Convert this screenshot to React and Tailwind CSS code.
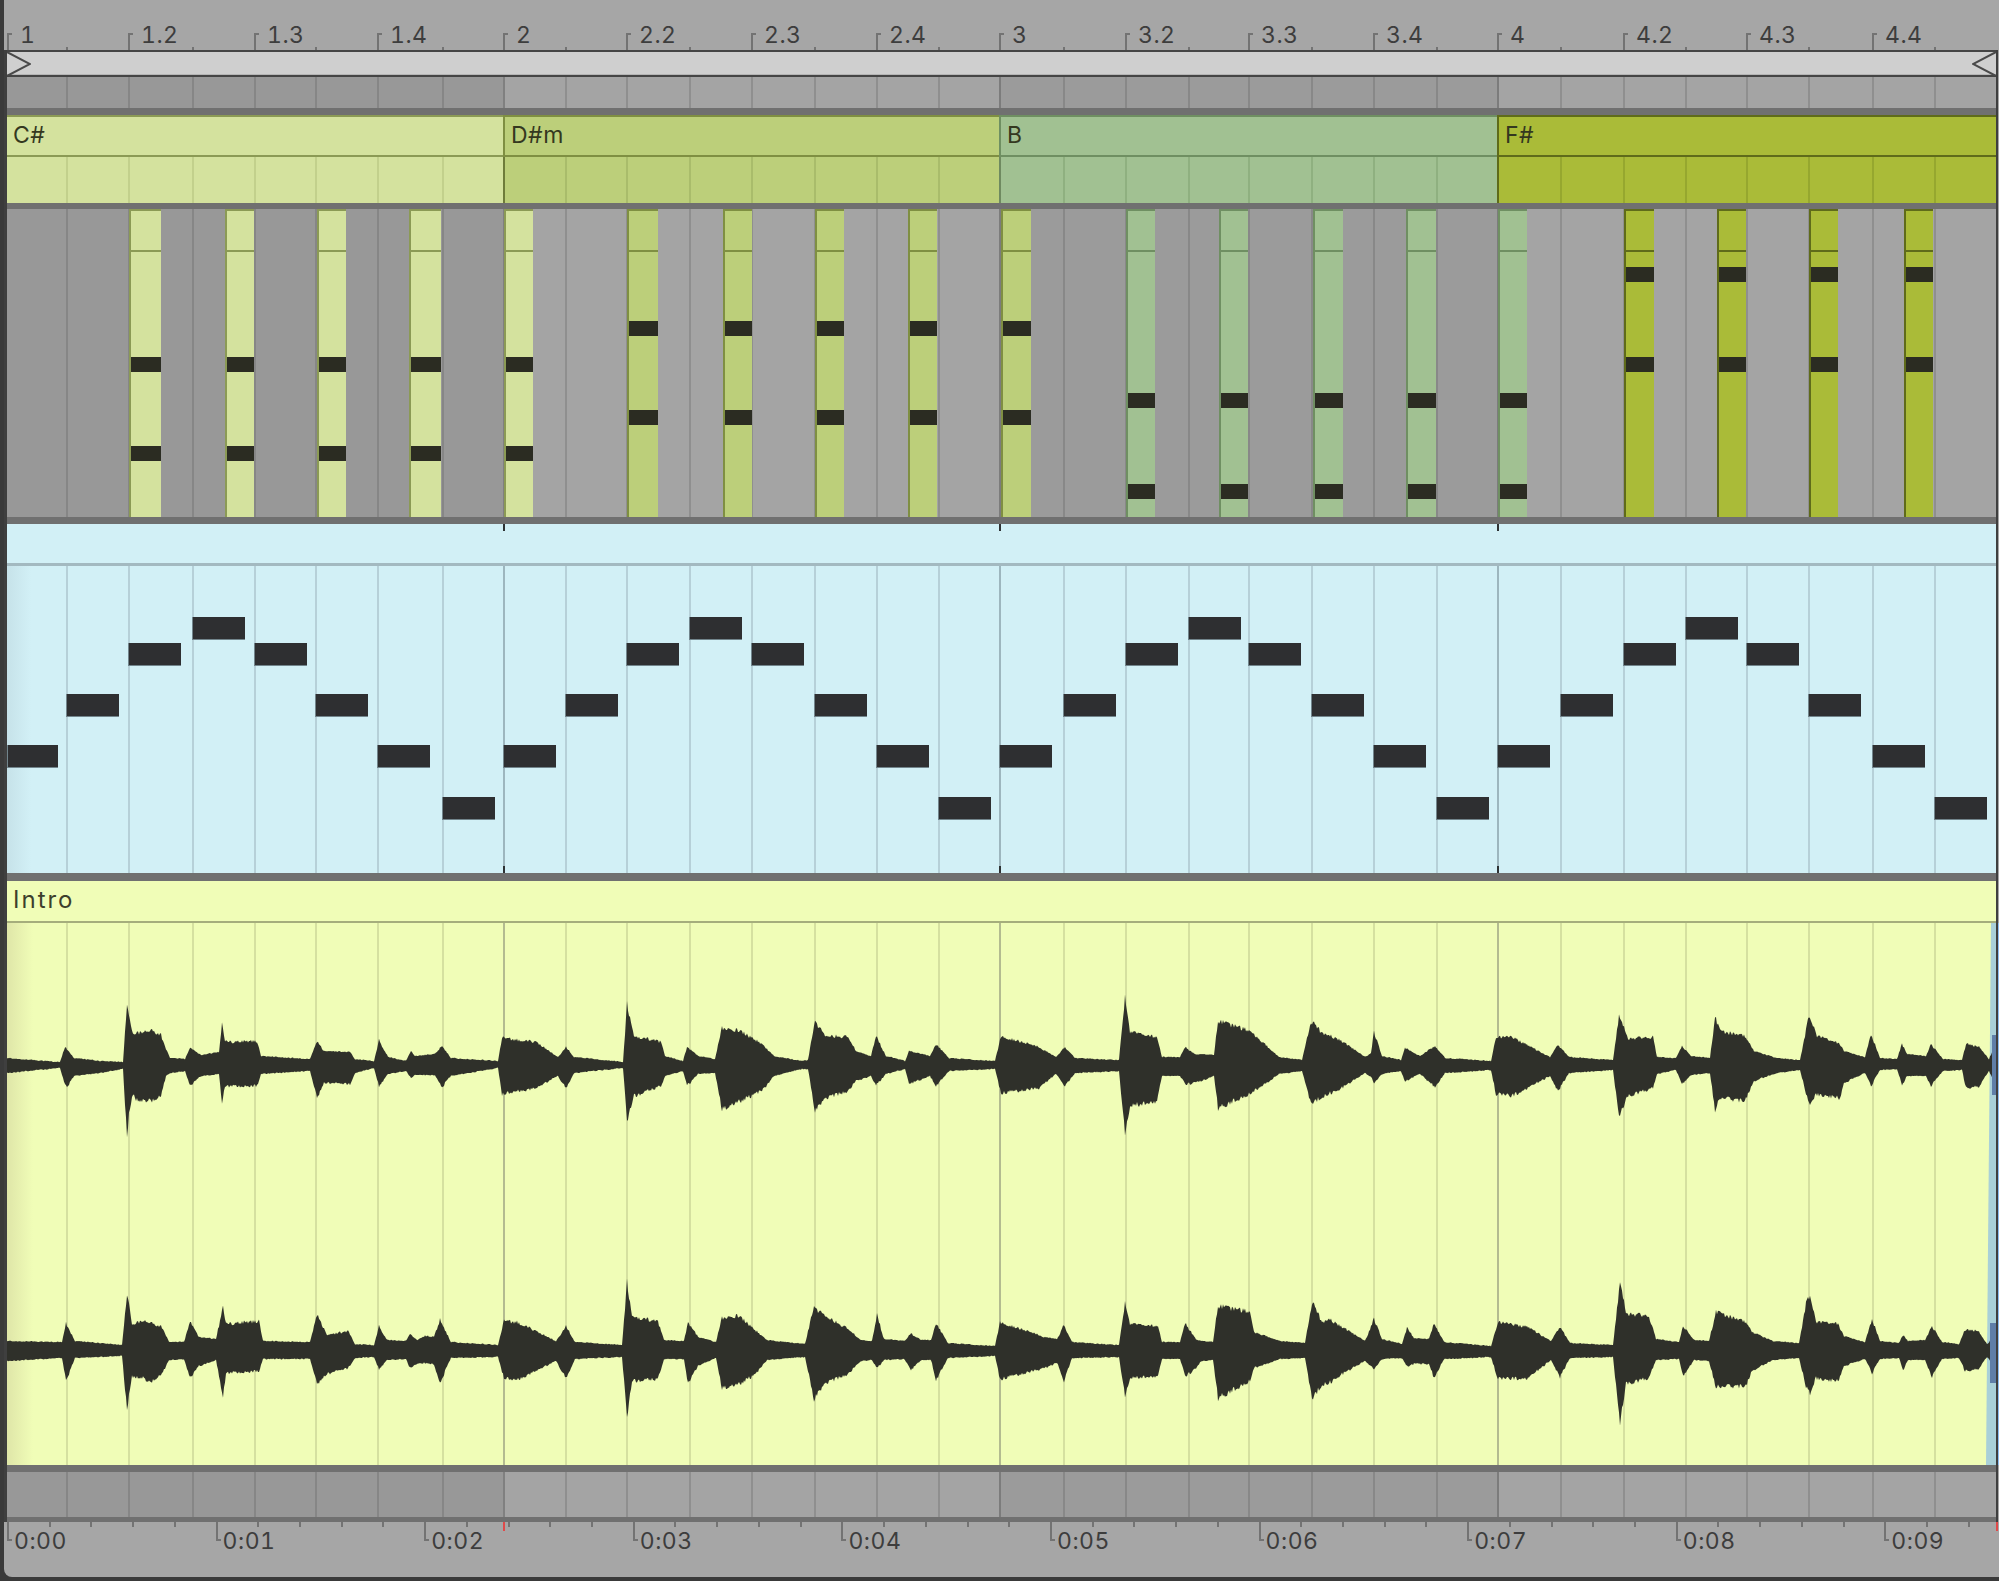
const COLS = 'grid-cols-[59px_62px_64px_62px_61px_62px_65px_61px_62px_61px_63px_62px_63px_62px_62px_61px_64px_62px_63px_60px_63px_62px_63px_61px_63px_63px_62px_61px_62px_64px_62px_62px]'

const CELLS = [59, 62, 64, 62, 61, 62, 65, 61, 62, 61, 63, 62, 63, 62, 62, 61, 64, 62, 63, 60, 63, 62, 63, 61, 63, 63, 62, 61, 62, 64, 62, 62]
const CELL_X = CELLS.reduce((a, w) => [...a, a[a.length - 1] + w], [0])

const BEATS = ['1', '1.2', '1.3', '1.4', '2', '2.2', '2.3', '2.4', '3', '3.2', '3.3', '3.4', '4', '4.2', '4.3', '4.4']

const GREY = [
  { bg: 'bg-[#989898]', line: 'border-[#868686]', bar: 'border-[#808080]' },
  { bg: 'bg-[#a4a4a4]', line: 'border-[#8f8f8f]', bar: 'border-[#808080]' },
  { bg: 'bg-[#9b9b9b]', line: 'border-[#888888]', bar: 'border-[#7c7c7c]' },
  { bg: 'bg-[#a4a4a4]', line: 'border-[#8f8f8f]', bar: 'border-[#7c7c7c]' },
]
const CLIPS = [
  { bg: 'bg-[#d4e29e]', line: 'border-[#c2d08c]', bar: 'border-[#7e8c4e]', top: 'border-[#8b9a55]', name: 'C#' },
  { bg: 'bg-[#bccf7a]', line: 'border-[#a9bc6b]', bar: 'border-[#6e7c3a]', top: 'border-[#7f8f42]', name: 'D#m' },
  { bg: 'bg-[#a1c192]', line: 'border-[#8fb080]', bar: 'border-[#6f8a60]', top: 'border-[#6f8f62]', name: 'B' },
  { bg: 'bg-[#aabb38]', line: 'border-[#96a72f]', bar: 'border-[#5f6b1a]', top: 'border-[#5f6b1a]', name: 'F#' },
]
const BLUE = Array(4).fill({ bg: 'bg-[#d2f0f6]', line: 'border-[#b6d0d8]', bar: 'border-[#9db6be]' })
const YELLOW = Array(4).fill({ bg: 'bg-[#f0fdb7]', line: 'border-[#d5e0a0]', bar: 'border-[#b3bb90]' })

// x in page pixels, marks = y of the two chord notes from the top of the lane
const STRIPS = [
  [129, 161, 0], [225, 254, 0], [317, 346, 0], [409, 441, 0], [504, 533, 0],
  [627, 658, 1], [723, 752, 1], [815, 844, 1], [908, 937, 1], [1001, 1031, 1],
  [1126, 1155, 2], [1219, 1248, 2], [1313, 1343, 2], [1406, 1436, 2], [1498, 1527, 2],
  [1624, 1654, 3], [1717, 1746, 3], [1809, 1838, 3], [1904, 1933, 3],
]
const MARKS = [[148, 237], [112, 201], [184, 275], [58, 148]]

const ARP = [179, 128, 77, 51, 77, 128, 179, 231]

// envelope of the audio: [x, up, down]
const CH1 = [[6,5,8],[60,1,3],[65,16,20],[67,14,22],[74,5,11],[100,2,8],[123,1,4],[127,61,71],[129,45,50],[133,30,29],[136,30,34],[152,32,36],[161,28,31],[166,14,11],[170,5,8],[185,4,6],[190,15,21],[201,8,11],[219,11,9],[222,39,38],[225,22,21],[228,21,21],[257,22,21],[261,7,9],[310,4,6],[317,22,33],[324,12,18],[350,11,19],[355,4,8],[374,2,3],[379,23,21],[388,6,9],[406,2,6],[411,12,13],[415,7,10],[435,9,10],[442,17,22],[451,5,11],[498,2,3],[502,25,29],[536,21,23],[558,6,11],[566,16,23],[574,6,8],[623,1,3],[627,59,55],[634,27,31],[661,21,21],[665,7,11],[683,2,6],[687,16,19],[690,14,18],[698,7,9],[715,4,8],[722,35,44],[740,32,36],[762,19,26],[774,7,11],[802,2,4],[808,3,4],[815,42,46],[825,27,33],[848,26,26],[856,12,16],[871,7,11],[876,27,20],[886,7,9],[905,2,4],[909,12,19],[930,7,11],[936,19,21],[949,5,6],[995,2,4],[1001,27,28],[1039,16,23],[1056,6,9],[1065,16,21],[1075,5,8],[1119,3,6],[1125,67,70],[1130,31,41],[1157,26,36],[1162,6,11],[1180,6,11],[1185,16,19],[1195,9,18],[1214,8,11],[1218,42,43],[1250,32,29],[1279,6,9],[1302,3,6],[1311,42,39],[1321,31,32],[1340,23,24],[1365,6,8],[1371,10,12],[1374,31,18],[1382,7,9],[1401,3,6],[1405,15,16],[1420,7,9],[1435,17,22],[1445,5,8],[1491,2,5],[1496,26,29],[1512,26,31],[1550,6,11],[1558,18,26],[1569,6,8],[1613,3,5],[1619,48,52],[1628,24,31],[1653,26,23],[1657,6,9],[1676,5,5],[1682,17,19],[1691,7,10],[1710,5,8],[1715,46,45],[1720,32,33],[1745,27,36],[1754,12,16],[1777,5,8],[1800,3,5],[1809,47,39],[1817,27,29],[1840,19,33],[1844,12,18],[1865,6,8],[1871,29,21],[1880,5,5],[1897,4,4],[1902,19,20],[1907,9,11],[1926,7,11],[1931,19,21],[1943,4,6],[1962,3,5],[1966,19,23],[1979,16,21],[1989,4,6],[1996,20,20]]

const CH2 = [[6,8,10],[62,7,7],[66,26,30],[75,8,7],[122,4,5],[127,56,58],[132,25,26],[143,28,26],[150,26,32],[162,22,23],[169,7,9],[184,7,8],[190,27,27],[199,12,15],[216,10,9],[223,42,46],[226,25,22],[259,28,20],[263,8,8],[310,7,8],[317,35,33],[327,14,23],[348,18,17],[355,5,7],[374,4,6],[379,23,18],[387,9,9],[406,8,8],[410,15,17],[417,9,13],[425,13,12],[434,12,13],[440,29,32],[451,7,7],[498,4,6],[504,28,27],[517,27,29],[556,8,10],[566,23,27],[575,7,8],[622,4,6],[627,67,65],[632,33,30],[658,27,28],[664,9,8],[684,8,8],[688,27,32],[698,12,15],[716,7,7],[722,31,37],[739,33,33],[756,18,23],[767,9,9],[805,5,6],[814,42,48],[825,33,32],[848,20,23],[861,9,10],[872,8,9],[877,34,17],[884,10,9],[904,8,8],[911,15,19],[921,9,9],[931,9,9],[936,26,29],[948,6,7],[995,3,5],[1000,27,28],[1045,12,17],[1057,10,12],[1064,24,30],[1072,7,7],[1119,4,6],[1125,47,46],[1130,25,27],[1158,23,25],[1162,7,8],[1180,7,8],[1185,26,25],[1196,10,18],[1201,8,10],[1213,7,9],[1218,43,47],[1250,37,30],[1254,17,17],[1280,8,8],[1305,6,7],[1312,47,48],[1322,27,33],[1329,30,32],[1342,22,23],[1365,8,10],[1374,30,18],[1382,10,8],[1402,5,7],[1407,21,15],[1414,11,13],[1429,10,13],[1434,26,27],[1444,7,8],[1491,3,6],[1498,27,28],[1528,22,27],[1551,8,9],[1560,22,26],[1570,6,7],[1613,4,6],[1620,68,73],[1626,35,33],[1649,33,27],[1656,10,9],[1679,7,8],[1683,23,25],[1694,9,9],[1709,8,10],[1716,37,36],[1746,27,35],[1752,17,20],[1773,8,9],[1799,6,7],[1806,45,35],[1810,53,42],[1816,27,27],[1838,25,30],[1844,13,15],[1865,7,8],[1872,30,22],[1880,8,8],[1899,6,7],[1903,14,19],[1908,8,9],[1925,9,9],[1932,23,26],[1942,7,8],[1959,5,7],[1965,19,20],[1978,18,18],[1987,5,6],[1996,14,16]]

const jitter = (x, k) => {
  const s = Math.sin(x * 12.9898 + k) * 43758.5453
  return s - Math.floor(s) - 0.5
}

function envelope(points, center) {
  let i = 0
  const top = []
  const bottom = []
  for (let x = 7; x <= 1996; x++) {
    while (i < points.length - 2 && points[i + 1][0] <= x) i++
    const [x0, u0, d0] = points[i]
    const [x1, u1, d1] = points[i + 1]
    const t = Math.min(1, (x - x0) / (x1 - x0))
    const u = u0 + (u1 - u0) * t
    const d = d0 + (d1 - d0) * t
    const rough = (a, k) => a + 1 + jitter(x, k) * (a > 12 ? a * 0.14 : 1)
    top.push(`${x - 7},${(center - rough(u, 1)).toFixed(1)}`)
    bottom.unshift(`${x - 7},${(center + rough(d, 7)).toFixed(1)}`)
  }
  return `M${top.join('L')}L${bottom.join('L')}Z`
}

function GridRow({ bars, height, children }) {
  return (
    <div className={`relative grid ${COLS} ${height}`}>
      {CELLS.map((_, i) => {
        const b = bars[Math.floor(i / 8)]
        return <div key={i} className={`${b.bg} ${i === 0 ? '' : 'border-l-2'} ${i % 8 === 0 ? b.bar : b.line}`} />
      })}
      {children}
    </div>
  )
}

function Thick({ height }) {
  return <div className={`${height} bg-[#707070]`} />
}

function Ruler() {
  return (
    <div className={`h-[50px] ml-[3px] w-[1989px] grid ${COLS}`}>
      {CELLS.map((_, i) => (
        <div key={i} className="relative">
          {i % 2 === 0 ? (
            <>
              <div className="absolute left-0 bottom-0 h-[17px] w-[5px] border-l-2 border-t-2 border-[#737373]" />
              <span className="absolute left-[13px] top-[23px] text-[23px] leading-[24px] tabular-nums tracking-[0.5px] text-[#3d3d3d] whitespace-nowrap">{BEATS[i / 2]}</span>
            </>
          ) : (
            <div className="absolute left-0 bottom-0 h-[3px] w-[2px] bg-[#737373]" />
          )}
        </div>
      ))}
    </div>
  )
}

function LoopBar() {
  return (
    <div className="relative h-[23px] bg-[#cfcfcf] border-b border-[#b5b5b5]">
      <svg className="absolute left-0 top-0" width="24" height="24" viewBox="0 0 24 24" fill="none">
        <path d="M0 0L23 12L0 24" stroke="#4a4a4a" strokeWidth="2" />
      </svg>
      <svg className="absolute right-0 top-0" width="24" height="24" viewBox="0 0 24 24" fill="none">
        <path d="M24 0L1 12L24 24" stroke="#4a4a4a" strokeWidth="2" />
      </svg>
    </div>
  )
}

function ClipHeaders() {
  return (
    <div className="grid grid-cols-[496px_496px_498px_499px] h-[42px]">
      {CLIPS.map((c, i) => (
        <div
          key={c.name}
          className={`${c.bg} ${c.top} ${i === 0 ? '' : 'border-l-2'} border-t-2 border-b-2 pl-[6px] text-[23px] leading-[36px] tracking-[0.5px] text-[#34381f]`}
        >
          {c.name}
        </div>
      ))}
    </div>
  )
}

function ChordLane() {
  return (
    <GridRow bars={GREY} height="h-[308px]">
      {STRIPS.map(([x0, x1, c]) => (
        <div
          key={x0}
          className={`absolute top-0 bottom-0 border-l-2 border-t-2 ${CLIPS[c].bg} ${CLIPS[c].top}`}
          style={{ left: x0 - 7, width: x1 - x0 }}
        >
          <div className={`absolute left-0 right-0 top-[39px] h-[2px] border-t-2 ${CLIPS[c].top}`} />
          {MARKS[c].map(y => (
            <div key={y} className="absolute left-0 right-0 h-[15px] bg-[#2b2c22]" style={{ top: y - 2 }} />
          ))}
        </div>
      ))}
    </GridRow>
  )
}

function PianoLane() {
  return (
    <>
      <div className="relative h-[39px] bg-[#d2f0f6] border-b-0">
        {[8, 16, 24].map(i => (
          <div key={i} className="absolute top-0 h-[7px] w-[2px] bg-[#2e3234]" style={{ left: CELL_X[i] }} />
        ))}
      </div>
      <div className="h-[3px] bg-[#a3b9c0]" />
      <GridRow bars={BLUE} height="h-[307px]">
        <div className="absolute left-0 top-0 bottom-0 w-[24px] bg-gradient-to-r from-[#c6e2e9] to-transparent" />
        {[8, 16, 24].map(i => (
          <div key={i} className="absolute bottom-0 h-[7px] w-[2px] bg-[#2e3234]" style={{ left: CELL_X[i] }} />
        ))}
        {Array.from({ length: 32 }, (_, i) => (
          <div
            key={i}
            className="absolute h-[23px] bg-[#2e2f31] border-l border-b border-[#72858c]"
            style={{ left: CELL_X[i], top: ARP[i % 8], width: i === 0 ? 51 : 53 }}
          />
        ))}
      </GridRow>
    </>
  )
}

function AudioLane() {
  return (
    <>
      <div className="h-[40px] bg-[#f0fdb7] pl-[6px] text-[24px] leading-[38px] tracking-[2px] text-[#3c3f2c]">Intro</div>
      <div className="h-[2px] bg-[#a5ad7c]" />
      <GridRow bars={YELLOW} height="h-[542px]">
        <div className="absolute left-0 top-0 bottom-0 w-[26px] bg-gradient-to-r from-[#dfe6a8] to-transparent" />
        <svg className="absolute inset-0" width="1989" height="542" viewBox="0 0 1989 542">
          <polygon points="1984,0 1989,0 1989,542 1979,542" fill="#a9d0d8" />
          <path d={envelope(CH1, 141)} fill="#2f302a" />
          <path d={envelope(CH2, 427)} fill="#2f302a" />
          <rect x="1985" y="112" width="4" height="60" fill="#5f7ea8" />
          <rect x="1983" y="400" width="6" height="60" fill="#5f7ea8" />
        </svg>
      </GridRow>
    </>
  )
}

function Timeline() {
  return (
    <div className="relative h-[55px] pl-[3px] flex overflow-hidden">
      {Array.from({ length: 10 }, (_, s) => (
        <div key={s} className="relative shrink-0 w-[208.6px] pl-[7px] pt-[7px] text-[23px] leading-[24px] tabular-nums tracking-[0.5px] text-[#3d3d3d]">
          <div className={`absolute left-0 top-0 h-[19px] w-[5px] border-l-2 border-b-2 border-[#737373] ${s === 0 ? 'border-l-0' : ''}`} />
          {[41.7, 83.4, 125.2, 166.9].map(x => (
            <div key={x} className="absolute top-0 h-[5px] w-[2px] bg-[#737373]" style={{ left: x }} />
          ))}
          0:0{s}
        </div>
      ))}
      <div className="absolute left-[499px] top-0 h-[9px] w-[2px] bg-[#e04a4a]" />
      <div className="absolute left-[1992px] top-0 h-[9px] w-[2px] bg-[#e04a4a]" />
    </div>
  )
}

export default function App() {
  return (
    <div className="w-[1999px] h-[1581px] bg-[#3a3a3a] pl-[4px] pb-[4px] flex font-['Inter',sans-serif] overflow-hidden">
      <div className="relative w-[1995px] h-[1577px] bg-[#a6a6a6] rounded-bl-[8px] overflow-hidden">
        <Ruler />
        <div className="w-[1994px] border-l-[3px] border-r-2 border-[#3f3f3f] flex flex-col">
          <div className="h-[2px] bg-[#454545]" />
          <LoopBar />
          <div className="h-[2px] bg-[#454545]" />
          <GridRow bars={GREY} height="h-[31px]" />
          <Thick height="h-[7px]" />
          <ClipHeaders />
          <GridRow bars={CLIPS} height="h-[46px]" />
          <Thick height="h-[6px]" />
          <ChordLane />
          <Thick height="h-[7px]" />
          <PianoLane />
          <Thick height="h-[8px]" />
          <AudioLane />
          <Thick height="h-[7px]" />
          <GridRow bars={GREY} height="h-[45px]" />
          <Thick height="h-[5px]" />
        </div>
        <Timeline />
        <div className="absolute right-0 top-[923px] h-[542px] w-px bg-[#8fbdf0]" />
      </div>
    </div>
  )
}
